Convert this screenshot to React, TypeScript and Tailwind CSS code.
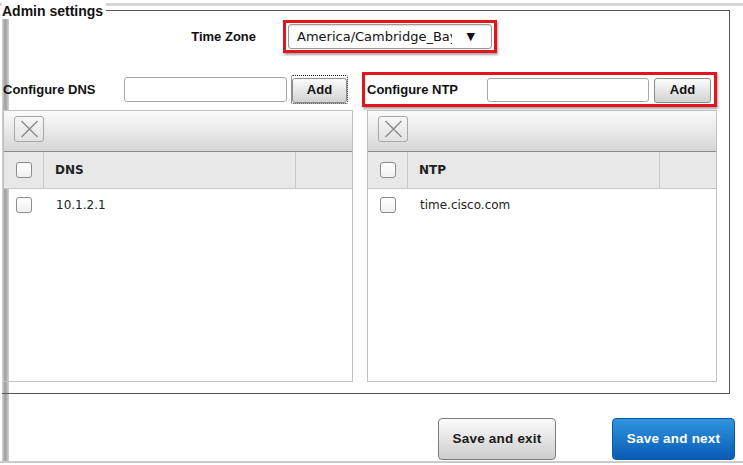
import React from 'react';

const label = "font-['Liberation_Sans',Arial,sans-serif] font-bold text-[13px] text-[#111]";
const grid = "font-['DejaVu_Sans',Verdana,sans-serif] text-[12px] text-[#222]";

const Check: React.FC = () => (
  <span className="block w-[16px] h-[16px] rounded-[3px] border border-[#8c8c8c] bg-[linear-gradient(#ffffff,#f1f1f1)]" />
);

const XIcon: React.FC = () => (
  <svg width="19" height="18" viewBox="0 0 19 18" fill="none">
    <path d="M1.5 1L17.5 17M17.5 1L1.5 17" stroke="#8a8a8a" strokeWidth="1.4" />
  </svg>
);

const ListPanel: React.FC<{ title: string; rows: string[] }> = ({ title, rows }) => (
  <div className="w-[350px] h-[272px] shrink-0 border border-[#c0c0c0] flex flex-col">
    <div className="h-[41px] border-b border-[#8a8a8a] bg-[linear-gradient(#fbfbfb,#d6d6d6)] pt-[5px] pl-[10px]">
      <button className="w-[30px] h-[26px] rounded-[3px] border border-[#a8a8a8] bg-[linear-gradient(#f7f7f7,#e2e2e2)] flex items-center justify-center">
        <XIcon />
      </button>
    </div>
    <div className={`h-[37px] flex border-b border-[#c8c8c8] bg-[#e8e8e8] ${grid}`}>
      <div className="w-[40px] border-r border-[#c8c8c8] flex items-center justify-center">
        <Check />
      </div>
      <div className="w-[252px] border-r border-[#c8c8c8] flex items-center pl-[11px] font-bold">{title}</div>
      <div className="flex-1" />
    </div>
    {rows.map(r => (
      <div key={r} className={`h-[31px] flex items-center ${grid}`}>
        <div className="w-[40px] flex items-center justify-center">
          <Check />
        </div>
        <div className="pl-[12px]">{r}</div>
      </div>
    ))}
  </div>
);

const AddButton: React.FC<{ w: string }> = ({ w }) => (
  <button className={`${w} h-[25px] rounded-[3px] border border-[#8a8a8a] bg-[linear-gradient(#fdfdfd,#d2d2d2)] ${label}`}>
    Add
  </button>
);

const App: React.FC = () => {
  return (
    <div className="w-[743px] h-[465px] overflow-hidden bg-white bg-[linear-gradient(#fff_0,#fff_3px,#d2d2d2_3px,#d8d8d8_6px,transparent_6px),linear-gradient(to_top,#fff_0,#fff_2px,#c4c4c4_2px,#d0d0d0_4px,transparent_4px),linear-gradient(90deg,#fff_0,#fff_2px,#d6d6d6_2px,#9c9c9c_5px,#d0d0d0_9px,#fff_9px)] pt-[10px] pl-[2px]">
      <div className="flex">
        <div className="w-[728px] shrink-0 grow-0 border-t border-r border-b border-[#555] pb-[11px]">
          <div className="-mt-[8px] h-[16px] w-fit bg-white pr-[3px] font-['Liberation_Sans',Arial,sans-serif] font-bold text-[14px] leading-[16px] text-[#111]">
            Admin settings
          </div>

          <div className="flex items-center mt-[1px]">
            <div className={`w-[254px] text-right ${label}`}>Time Zone</div>
            <div className="ml-[27px] border-[3px] border-[#e3141c] px-[2px] py-[1px] shadow-[1px_2px_2px_rgba(0,0,0,0.35)]">
              <div className="w-[204px] h-[25px] rounded-[3px] border border-[#9a9a9a] shadow-[inset_0_1px_2px_rgba(0,0,0,0.15)] flex items-center pl-[8px] font-['DejaVu_Sans',Verdana,sans-serif] text-[13px] text-[#111]">
                <span className="w-[155px] overflow-hidden whitespace-nowrap">America/Cambridge_Bay</span>
                <span className="ml-auto mr-[16px] text-[11px] leading-none">▼</span>
              </div>
            </div>
          </div>

          <div className="flex items-center mt-[19px] h-[35px]">
            <div className="flex items-center pl-[1px]">
              <div className={`w-[121px] ${label}`}>Configure DNS</div>
              <input className="w-[163px] h-[25px] rounded-[3px] border border-[#a8a8a8] bg-white" />
              <div className="ml-[4px] border border-dotted border-[#222] rounded-[2px]">
                <AddButton w="w-[55px]" />
              </div>
            </div>
            <div className="ml-[14px] w-[355px] h-[35px] shrink-0 border-[3px] border-[#e3141c] flex items-center pl-[2px] shadow-[1px_2px_2px_rgba(0,0,0,0.35)]">
              <div className={`w-[120px] ${label}`}>Configure NTP</div>
              <input className="w-[162px] h-[24px] rounded-[3px] border border-[#a8a8a8] bg-white" />
              <div className="ml-[5px]">
                <AddButton w="w-[57px]" />
              </div>
            </div>
          </div>

          <div className="flex gap-[14px] mt-[3px] pl-[1px]">
            <ListPanel title="DNS" rows={['10.1.2.1']} />
            <ListPanel title="NTP" rows={['time.cisco.com']} />
          </div>
        </div>
        <div className="flex-1" />
      </div>

      <div className="flex justify-end gap-[56px] pr-[8px] mt-[24px] font-['Liberation_Sans',Arial,sans-serif] font-bold text-[13.5px]">
        <button className="w-[118px] h-[42px] rounded-[4px] border border-[#7c7c7c] bg-[linear-gradient(#fbfbfb,#cdcdcd)] text-[#1a1a1a] tracking-[0.2px]">
          Save and exit
        </button>
        <button className="w-[123px] h-[42px] rounded-[4px] border border-[#0b58a6] bg-[linear-gradient(#2f95de,#0a5cb6)] text-white tracking-[0.2px]">
          Save and next
        </button>
      </div>
    </div>
  );
};

export default App;
